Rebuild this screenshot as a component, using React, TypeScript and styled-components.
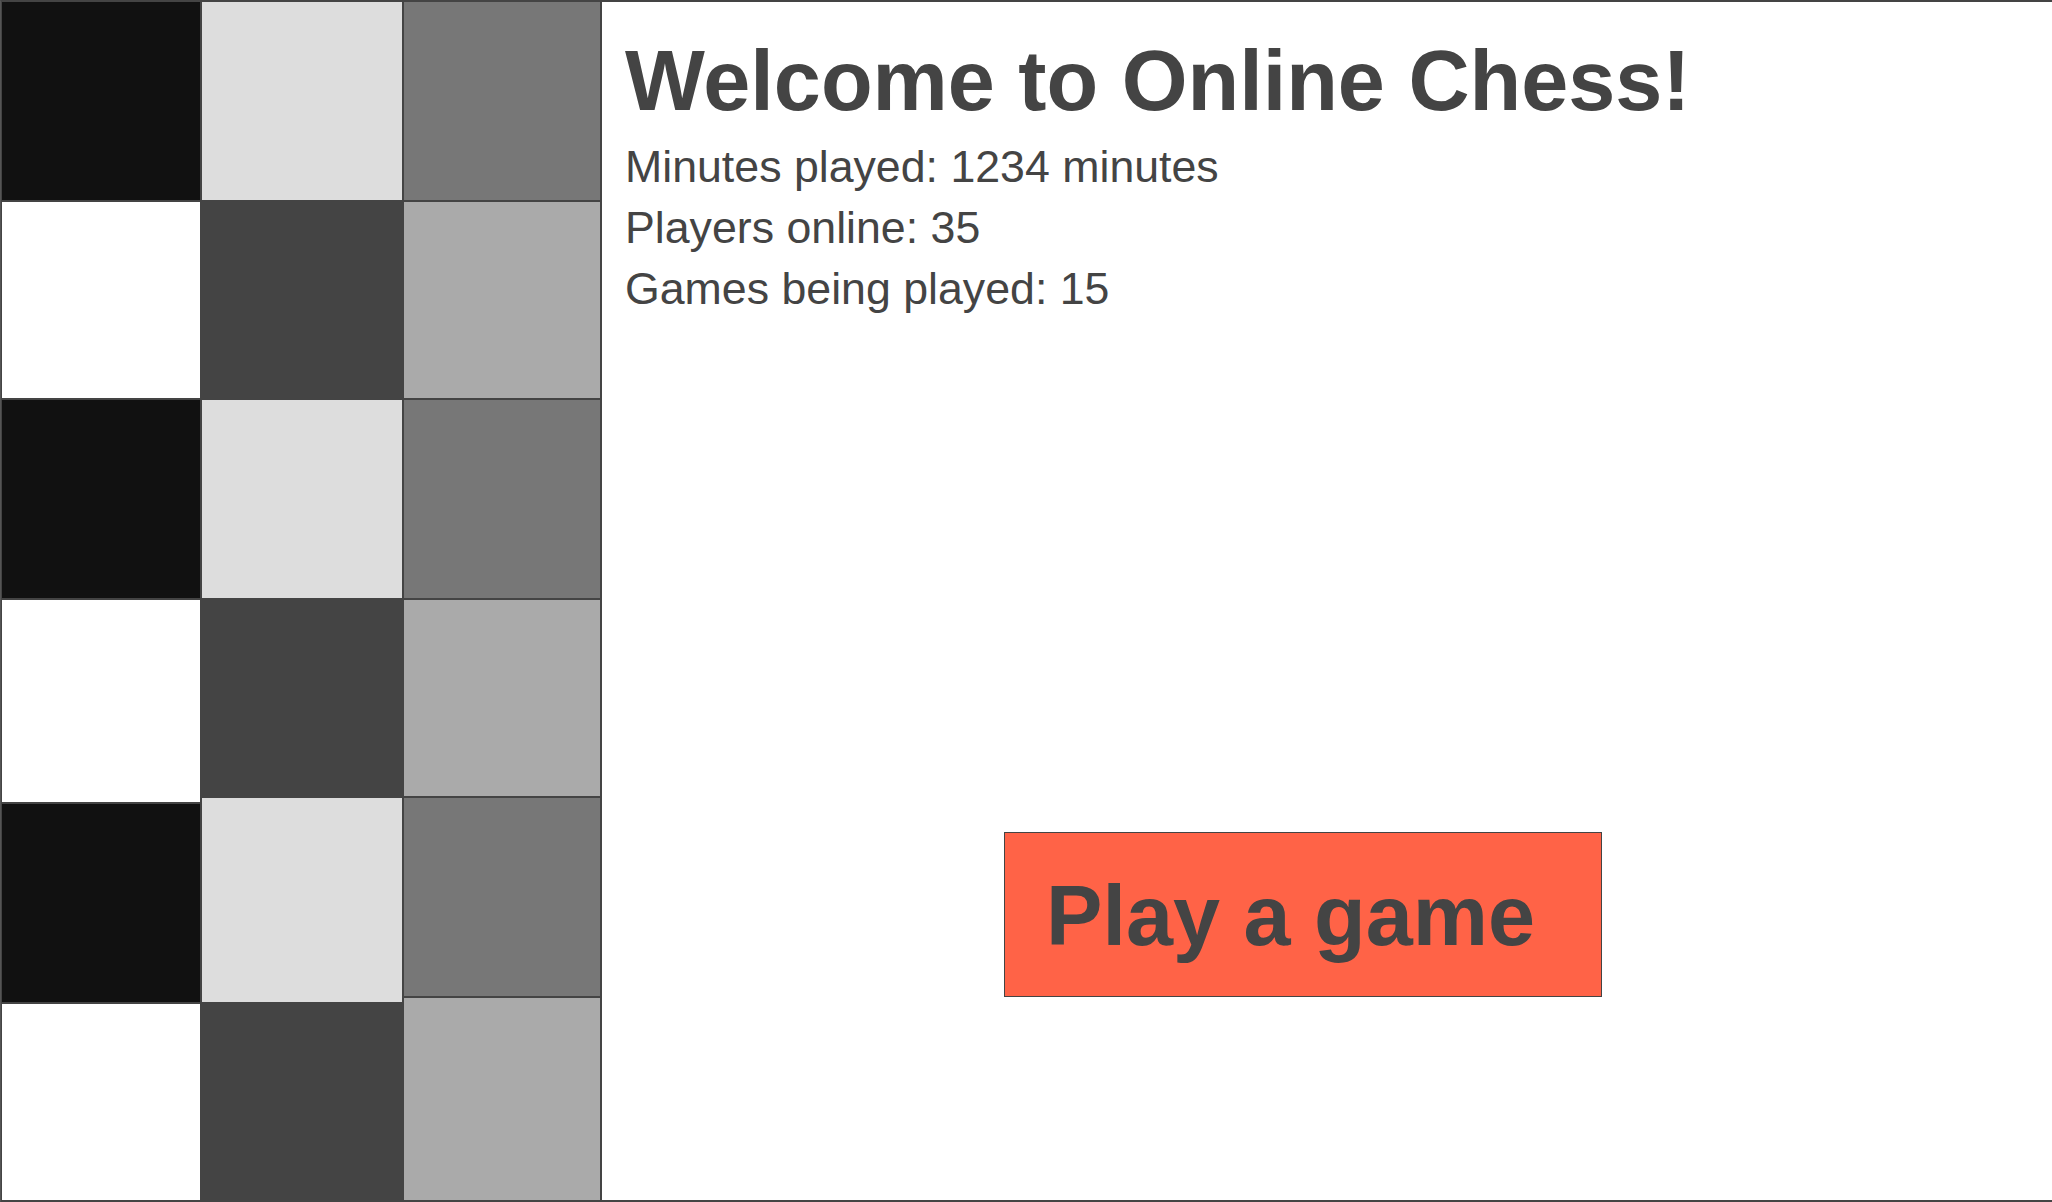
import React from "react";
import styled, { createGlobalStyle } from "styled-components";

const GlobalStyle = createGlobalStyle`
  html, body {
    margin: 0;
    padding: 0;
    background: #ffffff;
    overflow: hidden;
  }
  body {
    font-family: "Liberation Sans", Arial, sans-serif;
    color: #444444;
  }
  * { box-sizing: border-box; }
`;

const Page = styled.div`
  display: flex;
  width: 2052px;
  height: 1202px;
  border-top: 1px solid #444;
  border-bottom: 1px solid #444;
  border-left: 1px solid #555;
  overflow: hidden;
`;

const Board = styled.div`
  display: flex;
  flex: none;
  height: 100%;
`;

const Column = styled.div<{ $w: number }>`
  display: flex;
  flex-direction: column;
  width: ${(p) => p.$w}px;
  flex: none;
`;

const Cell = styled.div<{ $bg: string; $h: number }>`
  flex: none;
  height: ${(p) => p.$h}px;
  background: ${(p) => p.$bg};
  border: 1px solid #444;
`;

const Panel = styled.main`
  flex: 1;
  display: flex;
  flex-direction: column;
  align-items: flex-start;
  border: 1px solid #444;
  border-right: none;
  padding: 29px 0 0 23px;
`;

const Title = styled.h1`
  margin: 0 0 5px;
  font-size: 84.6px;
  line-height: 100px;
  font-weight: 700;
  color: #444;
`;

const Stat = styled.p`
  margin: 0;
  font-size: 44.7px;
  line-height: 61px;
  color: #444;
`;

const PlayButton = styled.button`
  margin: 513px 0 0 379px;
  width: 598px;
  height: 165px;
  display: flex;
  align-items: center;
  padding: 2px 0 0 41px;
  background: tomato;
  border: 1px solid #444;
  font-family: "Liberation Sans", Arial, sans-serif;
  font-size: 84.6px;
  font-weight: 700;
  color: #444;
  cursor: pointer;
  text-align: left;
`;

const columns = [
  {
    w: 200,
    cells: [
      ["#111", 200],
      ["#fff", 198],
      ["#111", 200],
      ["#fff", 204],
      ["#111", 200],
      ["#fff", 198],
    ],
  },
  {
    w: 202,
    cells: [
      ["#ddd", 200],
      ["#444", 198],
      ["#ddd", 200],
      ["#444", 198],
      ["#ddd", 206],
      ["#444", 198],
    ],
  },
  {
    w: 198,
    cells: [
      ["#777", 200],
      ["#aaa", 198],
      ["#777", 200],
      ["#aaa", 198],
      ["#777", 200],
      ["#aaa", 204],
    ],
  },
] as const;

export default function App() {
  return (
    <>
      <GlobalStyle />
      <Page>
        <Board>
          {columns.map((col, ci) => (
            <Column key={ci} $w={col.w}>
              {col.cells.map(([bg, h], ri) => (
                <Cell key={ri} $bg={bg} $h={h} />
              ))}
            </Column>
          ))}
        </Board>
        <Panel>
          <Title>Welcome to Online Chess!</Title>
          <Stat>Minutes played: 1234 minutes</Stat>
          <Stat>Players online: 35</Stat>
          <Stat>Games being played: 15</Stat>
          <PlayButton>Play a game</PlayButton>
        </Panel>
      </Page>
    </>
  );
}
